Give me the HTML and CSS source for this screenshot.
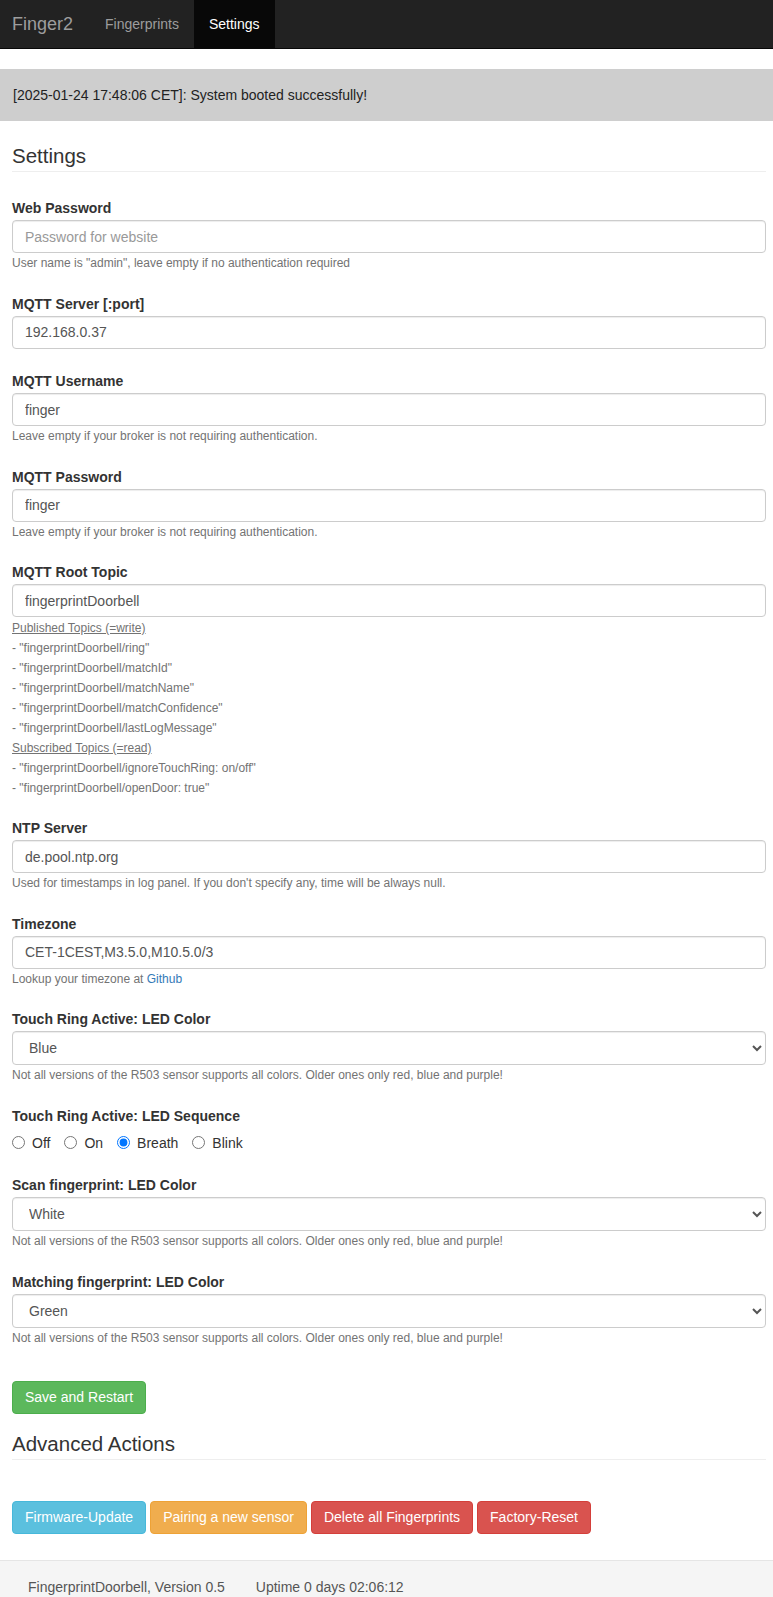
FILE: index.html
```html
<!DOCTYPE html>
<html lang="en">
<head>
<meta charset="utf-8">
<title>Finger2 - Settings</title>
<link rel="stylesheet" href="styles.css">
</head>
<body>
<nav class="navbar">
  <a class="brand" href="#">Finger2</a>
  <a class="nav-link" href="#">Fingerprints</a>
  <a class="nav-link active" href="#">Settings</a>
</nav>

<div class="alert">[2025-01-24 17:48:06 CET]: System booted successfully!</div>

<main class="container">
  <h2 class="page-header">Settings</h2>

  <form class="settings-form">
    <div class="form-group">
      <label class="label">Web Password</label>
      <input class="form-control" type="password" placeholder="Password for website">
      <div class="help">User name is "admin", leave empty if no authentication required</div>
    </div>

    <div class="form-group">
      <label class="label">MQTT Server [:port]</label>
      <input class="form-control" type="text" value="192.168.0.37">
    </div>

    <div class="form-group">
      <label class="label">MQTT Username</label>
      <input class="form-control" type="text" value="finger">
      <div class="help">Leave empty if your broker is not requiring authentication.</div>
    </div>

    <div class="form-group">
      <label class="label">MQTT Password</label>
      <input class="form-control" type="text" value="finger">
      <div class="help">Leave empty if your broker is not requiring authentication.</div>
    </div>

    <div class="form-group topics-group">
      <label class="label">MQTT Root Topic</label>
      <input class="form-control" type="text" value="fingerprintDoorbell">
      <div class="topics">
        <div class="topic-title">Published Topics (=write)</div>
        <div>- "fingerprintDoorbell/ring"</div>
        <div>- "fingerprintDoorbell/matchId"</div>
        <div>- "fingerprintDoorbell/matchName"</div>
        <div>- "fingerprintDoorbell/matchConfidence"</div>
        <div>- "fingerprintDoorbell/lastLogMessage"</div>
        <div class="topic-title">Subscribed Topics (=read)</div>
        <div>- "fingerprintDoorbell/ignoreTouchRing: on/off"</div>
        <div>- "fingerprintDoorbell/openDoor: true"</div>
      </div>
    </div>

    <div class="form-group">
      <label class="label">NTP Server</label>
      <input class="form-control" type="text" value="de.pool.ntp.org">
      <div class="help">Used for timestamps in log panel. If you don't specify any, time will be always null.</div>
    </div>

    <div class="form-group">
      <label class="label">Timezone</label>
      <input class="form-control" type="text" value="CET-1CEST,M3.5.0,M10.5.0/3">
      <div class="help">Lookup your timezone at <a class="link" href="#">Github</a></div>
    </div>

    <div class="form-group">
      <label class="label">Touch Ring Active: LED Color</label>
      <select class="form-control select">
        <option>Red</option>
        <option selected>Blue</option>
        <option>Purple</option>
        <option>Green</option>
        <option>Yellow</option>
        <option>Cyan</option>
        <option>White</option>
      </select>
      <div class="help">Not all versions of the R503 sensor supports all colors. Older ones only red, blue and purple!</div>
    </div>

    <div class="form-group radio-group">
      <label class="label">Touch Ring Active: LED Sequence</label>
      <div class="radios">
        <label class="radio-opt"><input type="radio" name="seq"> Off</label>
        <label class="radio-opt"><input type="radio" name="seq"> On</label>
        <label class="radio-opt"><input type="radio" name="seq" checked> Breath</label>
        <label class="radio-opt"><input type="radio" name="seq"> Blink</label>
      </div>
    </div>

    <div class="form-group">
      <label class="label">Scan fingerprint: LED Color</label>
      <select class="form-control select">
        <option>Red</option>
        <option>Blue</option>
        <option>Purple</option>
        <option>Green</option>
        <option>Yellow</option>
        <option>Cyan</option>
        <option selected>White</option>
      </select>
      <div class="help">Not all versions of the R503 sensor supports all colors. Older ones only red, blue and purple!</div>
    </div>

    <div class="form-group">
      <label class="label">Matching fingerprint: LED Color</label>
      <select class="form-control select">
        <option>Red</option>
        <option>Blue</option>
        <option>Purple</option>
        <option selected>Green</option>
        <option>Yellow</option>
        <option>Cyan</option>
        <option>White</option>
      </select>
      <div class="help">Not all versions of the R503 sensor supports all colors. Older ones only red, blue and purple!</div>
    </div>

    <button type="button" class="btn btn-success save-btn">Save and Restart</button>
  </form>

  <h2 class="page-header advanced">Advanced Actions</h2>

  <div class="actions">
    <button type="button" class="btn btn-info">Firmware-Update</button>
    <button type="button" class="btn btn-warning">Pairing a new sensor</button>
    <button type="button" class="btn btn-danger">Delete all Fingerprints</button>
    <button type="button" class="btn btn-danger">Factory-Reset</button>
  </div>
</main>

<footer class="footer">
  <span class="footer-item">FingerprintDoorbell, Version 0.5</span>
  <span class="footer-item">Uptime 0 days 02:06:12</span>
</footer>
</body>
</html>
```

FILE: styles.css
```css
* {
  box-sizing: border-box;
}

html, body {
  margin: 0;
  padding: 0;
}

body {
  font-family: "Liberation Sans", Arial, Helvetica, sans-serif;
  font-size: 14px;
  line-height: 20px;
  color: #333;
  background: #fff;
}

/* Navbar */
.navbar {
  display: flex;
  align-items: stretch;
  height: 49px;
  background: #222;
  border-bottom: 1px solid #080808;
  padding-left: 12px;
}

.brand {
  display: flex;
  align-items: center;
  font-size: 18px;
  color: #9d9d9d;
  text-decoration: none;
  padding-right: 17px;
}

.nav-link {
  display: flex;
  align-items: center;
  padding: 0 15px;
  color: #9d9d9d;
  text-decoration: none;
}

.nav-link.active {
  background: #080808;
  color: #fff;
}

/* Alert */
.alert {
  margin-top: 20px;
  background: #cecece;
  border: 1px solid #cecece;
  padding: 15px 12px;
  color: #222;
  line-height: 20px;
}

/* Container */
.container {
  padding: 0 7px 0 12px;
}

.page-header {
  font-size: 20.5px;
  font-weight: 400;
  line-height: 22.5px;
  margin: 24px 0 26px;
  padding-bottom: 3.5px;
  border-bottom: 1px solid #eee;
  color: #333;
}

.page-header.advanced {
  margin: 19px 0 40.5px;
}

/* Form */
.settings-form {
  margin: 0;
}

.form-group {
  margin-bottom: 22.5px;
}

.label {
  display: block;
  font-weight: 700;
  line-height: 20px;
  margin-bottom: 2px;
  color: #333;
}

.form-control {
  display: block;
  width: 100%;
  height: 33px;
  padding: 6px 12px;
  font-family: inherit;
  font-size: 14px;
  line-height: 20px;
  color: #555;
  background: #fff;
  border: 1px solid #ccc;
  border-radius: 4px;
  box-shadow: inset 0 1px 1px rgba(0, 0, 0, 0.075);
}

.form-control::placeholder {
  color: #999;
}

.select {
  height: 34px;
}

.help {
  margin-top: 2px;
  font-size: 12px;
  line-height: 16px;
  color: #737373;
}

.link {
  color: #337ab7;
  text-decoration: none;
}

.topics {
  margin-top: 1px;
  font-size: 12px;
  line-height: 20px;
  color: #737373;
}

.topic-title {
  text-decoration: underline;
}

.topics-group {
  margin-bottom: 20px;
}

/* Radios */
.radios {
  display: flex;
  align-items: center;
  margin-top: 7px;
  line-height: 20px;
}

.radio-opt {
  display: inline-flex;
  align-items: center;
  margin-right: 14px;
  color: #333;
}

.radio-opt input {
  width: 13px;
  height: 13px;
  margin: 0 7px 0 0;
}

/* Buttons */
.btn {
  display: inline-block;
  height: 33px;
  padding: 6px 12px;
  font-family: inherit;
  font-size: 14px;
  line-height: 19px;
  color: #fff;
  border: 1px solid transparent;
  border-radius: 4px;
  cursor: pointer;
  vertical-align: top;
}

.save-btn {
  margin-top: 13px;
}

.btn-success {
  background: #5cb85c;
  border-color: #4cae4c;
}

.btn-info {
  background: #5bc0de;
  border-color: #46b8da;
}

.btn-warning {
  background: #f0ad4e;
  border-color: #eea236;
}

.btn-danger {
  background: #d9534f;
  border-color: #d43f3a;
}

.actions {
  display: flex;
  gap: 4px;
  margin-bottom: 26px;
}

/* Footer */
.footer {
  background: #f5f5f5;
  border-top: 1px solid #e5e5e5;
  padding: 16px 12px 17px 28px;
  color: #555;
}

.footer-item {
  margin-right: 27px;
}
```
